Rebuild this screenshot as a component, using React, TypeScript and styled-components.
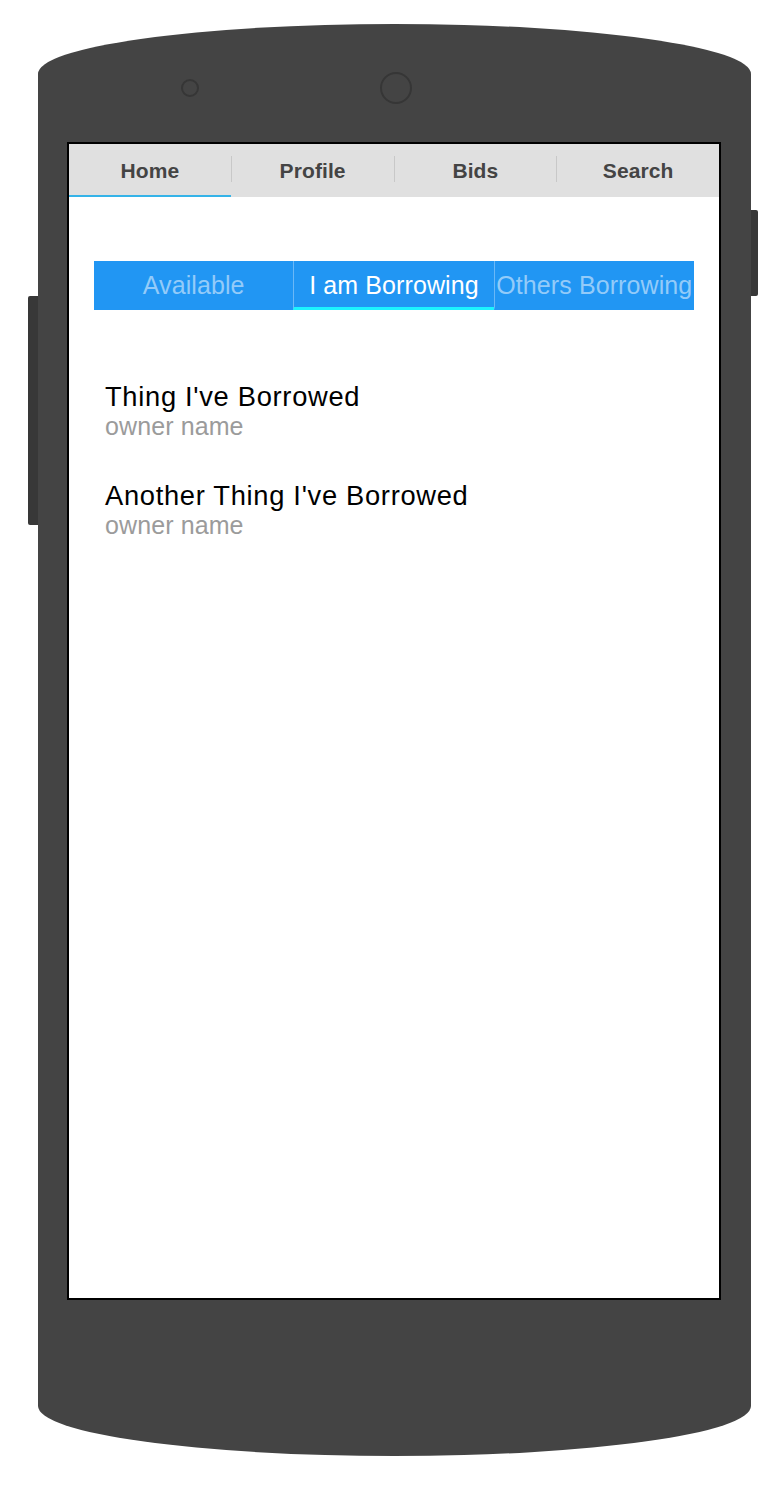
import React, { useState } from "react";
import styled, { createGlobalStyle } from "styled-components";

const Global = createGlobalStyle`
  html, body { margin: 0; padding: 0; background: #ffffff; }
  body { font-family: "Liberation Sans", Arial, Helvetica, sans-serif; }
  * { box-sizing: border-box; }
`;

const Page = styled.div`
  width: 778px;
  height: 1488px;
  padding: 24px 0 0 38px;
`;

const Phone = styled.div`
  position: relative;
  width: 713px;
  height: 1432px;
  background: #444444;
  border-radius: 50% / 50px;
  display: flex;
  flex-direction: column;
`;

const SideButton = styled.div<{ $side: "left" | "right"; $top: number; $height: number; $width: number }>`
  position: absolute;
  top: ${(p) => p.$top}px;
  height: ${(p) => p.$height}px;
  width: ${(p) => p.$width}px;
  background: #383838;
  ${(p) =>
    p.$side === "left"
      ? `left: -${p.$width}px; border-radius: 2px 0 0 2px;`
      : `right: -${p.$width}px; border-radius: 0 2px 2px 0;`}
`;

const SensorRow = styled.div`
  display: flex;
  align-items: center;
  height: 32px;
  margin-top: 48px;
  padding-left: 143px;
  gap: 181px;
`;

const Sensor = styled.div<{ $size: number }>`
  width: ${(p) => p.$size}px;
  height: ${(p) => p.$size}px;
  border-radius: 50%;
  border: 2px solid #363636;
`;

const Screen = styled.div`
  margin: 38px 0 0 29px;
  width: 654px;
  height: 1158px;
  border: 2px solid #000000;
  background: #ffffff;
  display: flex;
  flex-direction: column;
`;

const NavBar = styled.nav`
  display: flex;
  align-items: stretch;
  height: 53px;
  background: #e0e0e0;
`;

const NavTab = styled.div<{ $active?: boolean }>`
  flex: 1;
  display: flex;
  align-items: center;
  justify-content: center;
  font-size: 21px;
  font-weight: 700;
  letter-spacing: 0.1px;
  color: #444444;
  border-bottom: 2px solid ${(p) => (p.$active ? "#35b3e8" : "transparent")};
  padding-top: 2px;
`;

const NavDivider = styled.div`
  width: 1px;
  height: 26px;
  align-self: center;
  margin-top: -3px;
  background: #c8c8c8;
`;

const Content = styled.div`
  padding: 64px 25px 0;
  display: flex;
  flex-direction: column;
`;

const Segmented = styled.div`
  display: flex;
  height: 49px;
  background: #2196f3;
`;

const Segment = styled.div<{ $active?: boolean; $first?: boolean }>`
  flex: 1;
  display: flex;
  align-items: center;
  justify-content: center;
  white-space: nowrap;
  font-size: 25px;
  letter-spacing: 0.1px;
  color: ${(p) => (p.$active ? "#ffffff" : "#93cbf9")};
  border-left: ${(p) => (p.$first ? "none" : "1px solid #6ab8f7")};
  border-bottom: 3px solid ${(p) => (p.$active ? "#1cf4ff" : "transparent")};
  padding-top: 3px;
`;

const List = styled.ul`
  list-style: none;
  margin: 72px 0 0;
  padding: 0 0 0 11px;
  display: flex;
  flex-direction: column;
  gap: 41px;
`;

const Item = styled.li`
  display: flex;
  flex-direction: column;
`;

const ItemTitle = styled.div`
  font-size: 27.3px;
  line-height: 30px;
  letter-spacing: 0.7px;
  color: #000000;
`;

const ItemOwner = styled.div`
  font-size: 25px;
  line-height: 28px;
  letter-spacing: 0.1px;
  color: #9b9b9b;
`;

const navTabs = ["Home", "Profile", "Bids", "Search"];
const segments = ["Available", "I am Borrowing", "Others Borrowing"];
const items = [
  { title: "Thing I've Borrowed", owner: "owner name" },
  { title: "Another Thing I've Borrowed", owner: "owner name" },
];

export default function App() {
  const [tab] = useState(0);
  const [seg] = useState(1);
  return (
    <>
      <Global />
      <Page>
        <Phone>
          <SideButton $side="left" $top={272} $height={229} $width={10} />
          <SideButton $side="right" $top={186} $height={86} $width={7} />
          <SensorRow>
            <Sensor $size={18} />
            <Sensor $size={32} />
          </SensorRow>
          <Screen>
            <NavBar>
              {navTabs.map((t, i) => (
                <React.Fragment key={t}>
                  {i > 0 && <NavDivider />}
                  <NavTab $active={i === tab}>{t}</NavTab>
                </React.Fragment>
              ))}
            </NavBar>
            <Content>
              <Segmented>
                {segments.map((s, i) => (
                  <Segment key={s} $active={i === seg} $first={i === 0}>
                    {s}
                  </Segment>
                ))}
              </Segmented>
              <List>
                {items.map((it) => (
                  <Item key={it.title}>
                    <ItemTitle>{it.title}</ItemTitle>
                    <ItemOwner>{it.owner}</ItemOwner>
                  </Item>
                ))}
              </List>
            </Content>
          </Screen>
        </Phone>
      </Page>
    </>
  );
}
